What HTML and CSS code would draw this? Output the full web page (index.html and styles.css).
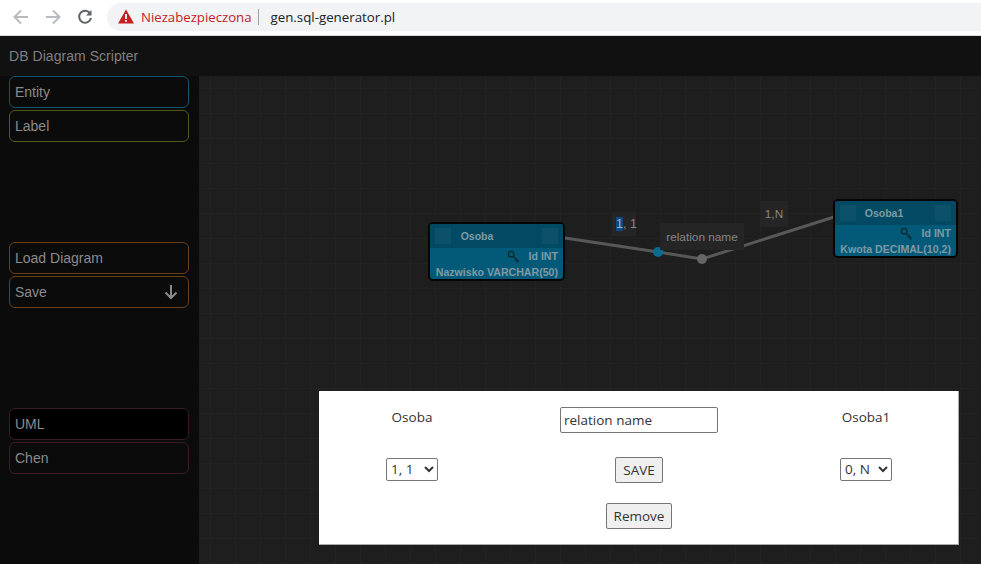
FILE: index.html
```html
<!DOCTYPE html>
<html lang="pl">
<head>
<meta charset="utf-8">
<title>DB Diagram Scripter</title>
<link rel="stylesheet" href="styles.css">
</head>
<body>
<div class="browser">
  <svg class="nav-icon" width="18" height="18" viewBox="0 0 18 18"><path d="M16 9H3M9 2.500 2.500 9 9 15.500" fill="none" stroke="#b9bbbe" stroke-width="2"/></svg>
  <svg class="nav-icon" width="18" height="18" viewBox="0 0 18 18"><path d="M2 9h13M9 2.500 15.500 9 9 15.500" fill="none" stroke="#b9bbbe" stroke-width="2"/></svg>
  <svg class="nav-icon" width="18" height="18" viewBox="0 0 18 18"><path d="M14.200 5.500A6 6 0 1 0 15 10" fill="none" stroke="#5f6368" stroke-width="2"/><path d="M15.500 2V7.500H10Z" fill="#5f6368"/></svg>
  <div class="omnibox">
    <svg width="16" height="15" viewBox="0 0 16 15"><path d="M8 .5 16 14.500H0Z" fill="#c5221f"/><path d="M7.100 5h1.800v5H7.100ZM7.100 11h1.800v1.800H7.100Z" fill="#fff"/></svg>
    <span class="insecure">Niezabezpieczona</span>
    <span class="divider"></span>
    <span class="url">gen.sql-generator.pl</span>
  </div>
</div>
<div class="app">
  <header class="app-title">DB Diagram Scripter</header>
  <nav class="sidebar">
    <div class="group">
      <div class="tool tool-blue">Entity</div>
      <div class="tool tool-olive">Label</div>
    </div>
    <div class="group">
      <div class="tool tool-orange">Load Diagram</div>
      <div class="tool tool-orange">Save
        <svg width="14" height="16" viewBox="0 0 14 16"><path d="M7 1v13M1.500 8.500 7 14l5.500-5.500" fill="none" stroke="#8a8a8a" stroke-width="2"/></svg>
      </div>
    </div>
    <div class="group">
      <div class="tool tool-plum tool-active">UML</div>
      <div class="tool tool-plum">Chen</div>
    </div>
  </nav>
  <main class="canvas">
    <svg class="links" width="782" height="488" viewBox="0 0 782 488">
      <path d="M366 162 459 176 503 183 635 141" fill="none" stroke="#585858" stroke-width="3"/>
      <circle cx="459" cy="176" r="5" fill="#0a6a90"/>
      <circle cx="503" cy="183" r="5" fill="#666"/>
    </svg>

    <div class="entity entity-a">
      <div class="entity-head"><span class="handle"></span><span class="entity-name">Osoba</span><span class="handle"></span></div>
      <div class="row">
        <svg class="key" width="13" height="13" viewBox="0 0 14 14"><circle cx="4.500" cy="4.500" r="3" fill="none" stroke="#0e2a35" stroke-width="1.500"/><path d="M6.500 6.500 12.500 12.500M10 10l-1.500 1.500M12 12l-1.500 1.500" fill="none" stroke="#0e2a35" stroke-width="1.500"/></svg>
        <span>Id INT</span>
      </div>
      <div class="row">Nazwisko VARCHAR(50)</div>
    </div>

    <div class="entity entity-b">
      <div class="entity-head"><span class="handle"></span><span class="entity-name">Osoba1</span><span class="handle"></span></div>
      <div class="row">
        <svg class="key" width="13" height="13" viewBox="0 0 14 14"><circle cx="4.500" cy="4.500" r="3" fill="none" stroke="#0e2a35" stroke-width="1.500"/><path d="M6.500 6.500 12.500 12.500M10 10l-1.500 1.500M12 12l-1.500 1.500" fill="none" stroke="#0e2a35" stroke-width="1.500"/></svg>
        <span>Id INT</span>
      </div>
      <div class="row">Kwota DECIMAL(10,2)</div>
    </div>

    <div class="tag tag-from"><span class="selected">1</span>, 1</div>
    <div class="tag tag-name">relation name</div>
    <div class="tag tag-to">1,N</div>

    <div class="dialog">
      <div class="dialog-label">Osoba</div>
      <input class="name-input" type="text" value="relation name">
      <div class="dialog-label">Osoba1</div>
      <select class="card"><option>1, 1</option></select>
      <button class="btn" type="button">SAVE</button>
      <select class="card"><option>0, N</option></select>
      <button class="btn btn-remove" type="button">Remove</button>
    </div>
  </main>
</div>
</body>
</html>
```

FILE: styles.css
```css
* { box-sizing: border-box; }
html, body { margin: 0; height: 100%; overflow: hidden; background: #0b0b0b; }
body { display: flex; flex-direction: column; width: 981px; height: 564px; }

.browser {
  height: 36px;
  flex: none;
  background: #fff;
  display: flex;
  align-items: center;
  padding: 0 0 2px 12px;
  gap: 14px;
  border-bottom: 1px solid #dadce0;
}
.nav-icon { flex: none; }
.omnibox {
  flex: 1;
  height: 28px;
  margin-left: -1px;
  background: #f1f3f4;
  border-radius: 14px 0 0 14px;
  display: flex;
  align-items: center;
  padding-left: 11px;
  font-family: "Open Sans", sans-serif;
}
.insecure { color: #c5221f; margin-left: 7px; font-size: 13.200px; }
.divider { width: 1px; height: 16px; background: #9aa0a6; margin: 0 11px 0 7px; }
.url { color: #202124; font-size: 13.300px; }

.app {
  flex: 1;
  display: grid;
  grid-template-columns: 199px 1fr;
  grid-template-rows: 40px 1fr;
  font-family: "Liberation Sans", Arial, sans-serif;
  min-height: 0;
}
.app-title {
  grid-column: 1 / 3;
  background: #111;
  color: #808080;
  font-size: 14px;
  padding: 12px 0 0 9px;
  letter-spacing: .05px;
}

.sidebar {
  background: #0b0b0b;
  padding: 0 10px 0 9px;
  display: flex;
  flex-direction: column;
  gap: 100px;
}
.group { display: flex; flex-direction: column; gap: 2px; }
.tool {
  height: 32px;
  border: 1px solid;
  border-radius: 6px;
  padding: 0 10px 0 5px;
  color: #8a8a8a;
  font-size: 14px;
  display: flex;
  align-items: center;
  justify-content: space-between;
}
.tool-blue { border-color: #12566f; }
.tool-olive { border-color: #4f5a1c; }
.tool-orange { border-color: #6a3f18; }
.tool-plum { border-color: #3a1c26; }
.tool-active { background: #000; }

.canvas {
  position: relative;
  background-color: #1e1e1e;
  background-image:
    linear-gradient(#222 1px, transparent 1px),
    linear-gradient(90deg, #222 1px, transparent 1px);
  background-size: 25px 25px;
  background-position: 11px 12px;
  overflow: hidden;
}
.links { position: absolute; left: 0; top: 0; }

.entity {
  position: absolute;
  background: #025a78;
  border: 2px solid #050505;
  border-radius: 5px;
  color: #7f9aa6;
  font-size: 10.600px;
  font-weight: 700;
  overflow: hidden;
}
.entity-a { left: 229px; top: 146px; width: 137px; height: 59px; }
.entity-b { left: 634px; top: 123px; width: 125px; height: 59px; }
.entity-head {
  height: 24px;
  background: #024a63;
  display: flex;
  align-items: center;
  justify-content: space-between;
  padding: 0 5px;
  font-size: 10.500px;
}
.entity-a .entity-name { margin-right: 39px; }
.entity-b .entity-name { margin-right: 23px; }
.handle { width: 16px; height: 16px; background: #0d5069; }
.row {
  height: 15px;
  padding: 0 5px;
  display: flex;
  align-items: center;
  justify-content: flex-end;
  white-space: nowrap;
}
.entity-head + .row { height: 16px; }
.key { margin-right: 9px; }

.tag {
  position: absolute;
  background: #252525;
  color: #858585;
  display: flex;
  align-items: center;
  justify-content: center;
  font-size: 11.800px;
}
.tag-from { left: 413px; top: 136px; width: 24px; height: 24px; padding-left: 5px; font-size: 12.500px; white-space: nowrap; }
.tag-name { left: 461px; top: 147px; width: 84px; height: 27px; }
.tag-to { left: 561px; top: 125px; width: 28px; height: 26px; }
.selected { background: #0c4a86; color: #9db4cc; }

.dialog {
  position: absolute;
  left: 120px;
  top: 315px;
  width: 640px;
  height: 154px;
  background: #fff;
  box-shadow: inset -1px -1px 0 #aaa;
  display: grid;
  grid-template-columns: 186px 268px 186px;
  grid-template-rows: 56px 46px 46px;
  justify-items: center;
  align-items: center;
  font: 13.500px "Open Sans", sans-serif;
  color: #333;
}
.dialog-label { margin-top: -4px; }
.name-input {
  width: 158px;
  height: 26px;
  padding: 0 3px;
  border: 1px solid #767676;
  border-radius: 2px;
  font: 13.500px "Open Sans", sans-serif;
  color: #333;
  margin-top: 2px;
}
.card {
  width: 52px;
  height: 23px;
  border: 1px solid #767676;
  border-radius: 2px;
  background: #fff;
  font: 13.500px "Open Sans", sans-serif;
  color: #333;
  margin-top: -2px;
}
.btn {
  height: 26px;
  padding: 0 7px;
  border: 1px solid #767676;
  border-radius: 2px;
  background: #efefef;
  font: 13.500px "Open Sans", sans-serif;
  color: #333;
}
.btn-remove { grid-column: 2; }
```
